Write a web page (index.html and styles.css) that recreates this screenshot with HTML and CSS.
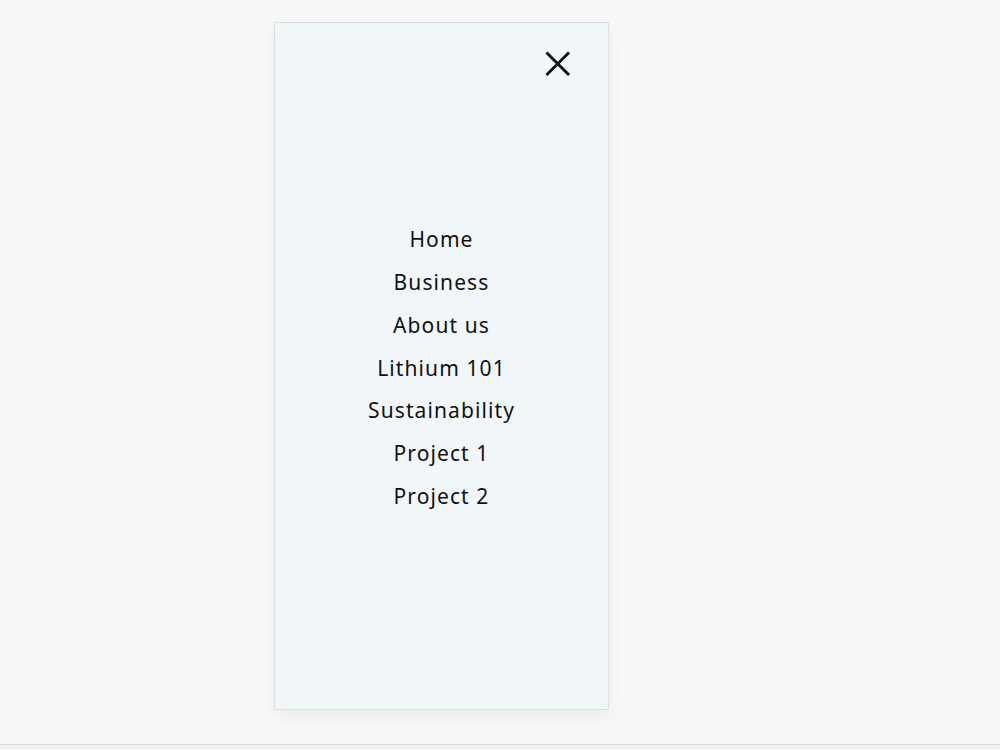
FILE: index.html
```html
<!DOCTYPE html>
<html lang="en">
<head>
<meta charset="utf-8">
<title>Menu</title>
<link rel="stylesheet" href="styles.css">
</head>
<body>
<div class="page">
  <div class="stage">
    <aside class="drawer">
      <button class="close" aria-label="Close menu">
        <svg width="26" height="26" viewBox="0 0 26 26" aria-hidden="true">
          <path d="M2.5 2.5 L23 23 M23 2.5 L2.5 23" stroke="#111" stroke-width="2.9" stroke-linecap="square" fill="none"/>
        </svg>
      </button>
      <nav class="menu">
        <a href="#">Home</a>
        <a href="#">Business</a>
        <a href="#">About us</a>
        <a href="#">Lithium 101</a>
        <a href="#">Sustainability</a>
        <a href="#">Project 1</a>
        <a href="#">Project 2</a>
      </nav>
    </aside>
  </div>
  <div class="footer-edge"></div>
</div>
</body>
</html>
```
FILE: styles.css
```css
html, body {
  margin: 0;
  padding: 0;
  height: 100%;
  background: #f8f8f8;
  font-family: "Noto Sans", "Open Sans", sans-serif;
  color: #111;
}

.page {
  display: flex;
  flex-direction: column;
  height: 750px;
  overflow: hidden;
}

.stage {
  flex: 1;
  padding: 22px 0 0 274px;
}

.drawer {
  position: relative;
  box-sizing: border-box;
  width: 335px;
  height: 688px;
  background: #f1f6f9;
  border: 1px solid #dcdfe2;
  box-shadow: 0 6px 18px rgba(0, 0, 0, 0.06);
  display: flex;
  flex-direction: column;
  justify-content: center;
}

.close {
  position: absolute;
  top: 28px;
  right: 37px;
  width: 26px;
  height: 26px;
  padding: 0;
  border: 0;
  background: none;
  cursor: pointer;
}

.close svg {
  display: block;
}

.menu {
  display: flex;
  flex-direction: column;
  align-items: center;
  padding-top: 4px;
}

.menu a {
  color: #111;
  text-decoration: none;
  font-size: 21px;
  letter-spacing: 1.1px;
  line-height: 42.8px;
}

.footer-edge {
  height: 5px;
  border-top: 1px solid #d9d9d9;
  background: #eef2f5;
}
```
